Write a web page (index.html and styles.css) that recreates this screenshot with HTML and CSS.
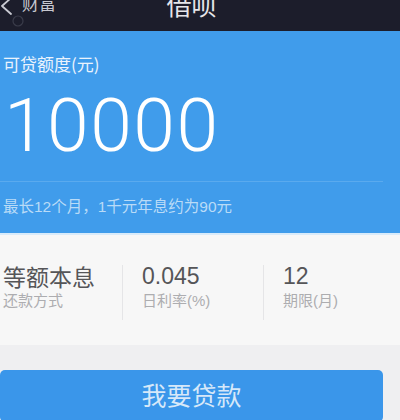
FILE: index.html
```html
<!DOCTYPE html>
<html lang="zh-CN">
<head>
<meta charset="utf-8">
<link rel="stylesheet" href="styles.css">
</head>
<body>
<div class="page">
  <header class="topbar">
    <div class="back">
      <svg class="back-icon" width="24" height="31" viewBox="0 0 24 31">
        <path d="M11 -2 L2 6 L11 14" fill="none" stroke="#c9cad2" stroke-width="1.8" stroke-linecap="round" stroke-linejoin="round"/>
        <circle cx="18" cy="21" r="5" fill="none" stroke="#3a3c4a" stroke-width="1.2"/>
      </svg>
      <span class="back-text">财富</span>
    </div>
    <div class="title">借呗</div>
    <div></div>
  </header>

  <section class="quota">
    <div class="quota-label">可贷额度(元)</div>
    <div class="quota-amount">10000</div>
    <div class="quota-rule"></div>
    <div class="quota-note">最长12个月，1千元年息约为90元</div>
  </section>

  <section class="stats">
    <div class="stat stat-first">
      <div class="stat-value cjk">等额本息</div>
      <div class="stat-label">还款方式</div>
    </div>
    <div class="stat stat-mid">
      <div class="stat-value">0.045</div>
      <div class="stat-label">日利率(%)</div>
    </div>
    <div class="stat stat-last">
      <div class="stat-value">12</div>
      <div class="stat-label">期限(月)</div>
    </div>
  </section>

  <div class="action">
    <button class="loan-btn">我要贷款</button>
  </div>
</div>
</body>
</html>
```

FILE: styles.css
```css
html, body {
  margin: 0;
  padding: 0;
  background: #efeff1;
}

body {
  width: 400px;
  height: 420px;
  overflow: hidden;
  font-family: "Liberation Sans", "Noto Sans CJK SC", sans-serif;
}

.page {
  width: 400px;
}

.topbar {
  height: 31px;
  background: #1c1d2b;
  display: grid;
  grid-template-columns: 1fr auto 1fr;
  padding-right: 17px;
  overflow: hidden;
  align-items: start;
}

.back {
  display: flex;
  align-items: flex-start;
}

.back-icon {
  display: block;
  flex: none;
}

.back-text {
  margin-left: -2px;
  margin-top: -7px;
  font-size: 17px;
  line-height: 20px;
  color: #c6c7cf;
  font-family: "Noto Sans CJK SC", sans-serif;
}

.title {
  margin-top: -10px;
  font-size: 25px;
  line-height: 28px;
  color: #e6e6ea;
  font-family: "Noto Sans CJK SC", sans-serif;
}

.quota {
  background: #409ceb;
  padding: 23px 17px 16px 3px;
  border-bottom: 2px solid #d9ebfa;
}

.quota-label {
  font-size: 17px;
  line-height: 20px;
  color: #eaf3fd;
  font-family: "Noto Sans CJK SC", sans-serif;
}

.quota-amount {
  margin-top: 14px;
  margin-left: 1px;
  font-family: "Roboto", "Liberation Sans", sans-serif;
  font-weight: 300;
  font-size: 75px;
  line-height: 74px;
  letter-spacing: 1.5px;
  color: #ffffff;
}

.quota-rule {
  margin-top: 19px;
  margin-left: -3px;
  height: 1px;
  background: #5aaaee;
}

.quota-note {
  margin-top: 15px;
  font-size: 15.5px;
  line-height: 20px;
  color: #b9dbf7;
  font-family: "Liberation Sans", "Noto Sans CJK SC", sans-serif;
}

.stats {
  background: #f7f7f7;
  height: 110px;
  box-sizing: border-box;
  padding-top: 30px;
  display: flex;
  align-items: flex-start;
}

.stat {
  height: 55px;
  box-sizing: border-box;
}

.stat-first {
  width: 122px;
  padding-left: 3px;
}

.stat-mid {
  width: 141px;
  padding-left: 19px;
  border-left: 1px solid #e5e5e7;
}

.stat-last {
  flex: 1;
  padding-left: 19px;
  border-left: 1px solid #e5e5e7;
}

.stat-value {
  margin-top: -3px;
  font-size: 23px;
  line-height: 28px;
  color: #555558;
}

.stat-value.cjk {
  font-family: "Noto Sans CJK SC", sans-serif;
}

.stat-label {
  margin-top: 1px;
  font-size: 15px;
  line-height: 20px;
  color: #adadb0;
  font-family: "Liberation Sans", "Noto Sans CJK SC", sans-serif;
}

.action {
  padding-top: 25px;
}

.loan-btn {
  display: block;
  width: 383px;
  height: 52px;
  margin: 0;
  padding: 0 0 4px 0;
  border: none;
  border-radius: 5px;
  background: #3a96ea;
  color: #d6e8f9;
  font-size: 25px;
  line-height: 48px;
  font-family: "Noto Sans CJK SC", sans-serif;
}
```
